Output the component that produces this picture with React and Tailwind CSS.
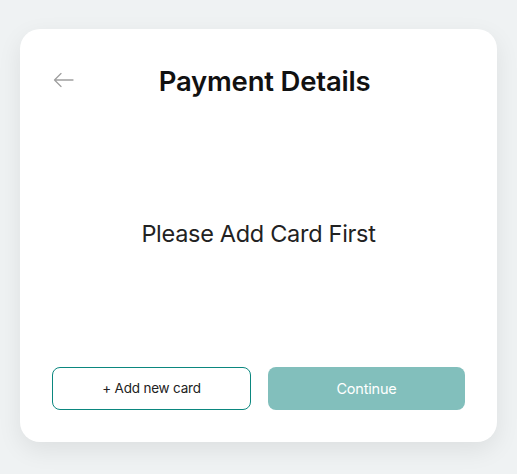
export default function App() {
  return (
    <div
      className="min-h-screen w-full bg-[#eff2f3] px-5 pt-[29px]"
      style={{ fontFamily: "Inter, 'Noto Sans', sans-serif" }}
    >
      <div className="flex h-[413px] w-[477px] flex-col rounded-[20px] bg-white px-8 pt-8 pb-8 shadow-[0_8px_24px_rgba(0,0,0,0.08)]">
        {/* Header */}
        <div className="relative flex h-[38px] items-center justify-center">
          <button className="absolute left-[1px] top-1/2 -translate-y-1/2 text-[#a0a0a0]">
            <svg width="21" height="15" viewBox="0 0 21 15" fill="none">
              <path
                d="M20 7.5H1.5M8 1L1.5 7.5 8 14"
                stroke="currentColor"
                strokeWidth="1.3"
                strokeLinecap="round"
                strokeLinejoin="round"
              />
            </svg>
          </button>
          <h1 className="pt-[3px] pl-[12px] text-[27.5px] font-[560] tracking-[-0.2px] text-[#111]">
            Payment Details
          </h1>
        </div>

        {/* Mensaje */}
        <div className="flex flex-1 items-center justify-center pt-[2px]">
          <p className="text-[23.5px] tracking-[-0.3px] text-[#222]">Please Add Card First</p>
        </div>

        {/* Botones */}
        <div className="flex gap-[17px]">
          <button className="h-[43px] flex-1 rounded-lg border border-[#0b877f] bg-white text-[13.5px] tracking-[-0.2px] text-[#222]">
            + Add new card
          </button>
          <button className="h-[43px] flex-1 rounded-lg bg-[#82bfbc] text-[14.5px] tracking-[-0.2px] text-white">
            Continue
          </button>
        </div>
      </div>
    </div>
  );
}
